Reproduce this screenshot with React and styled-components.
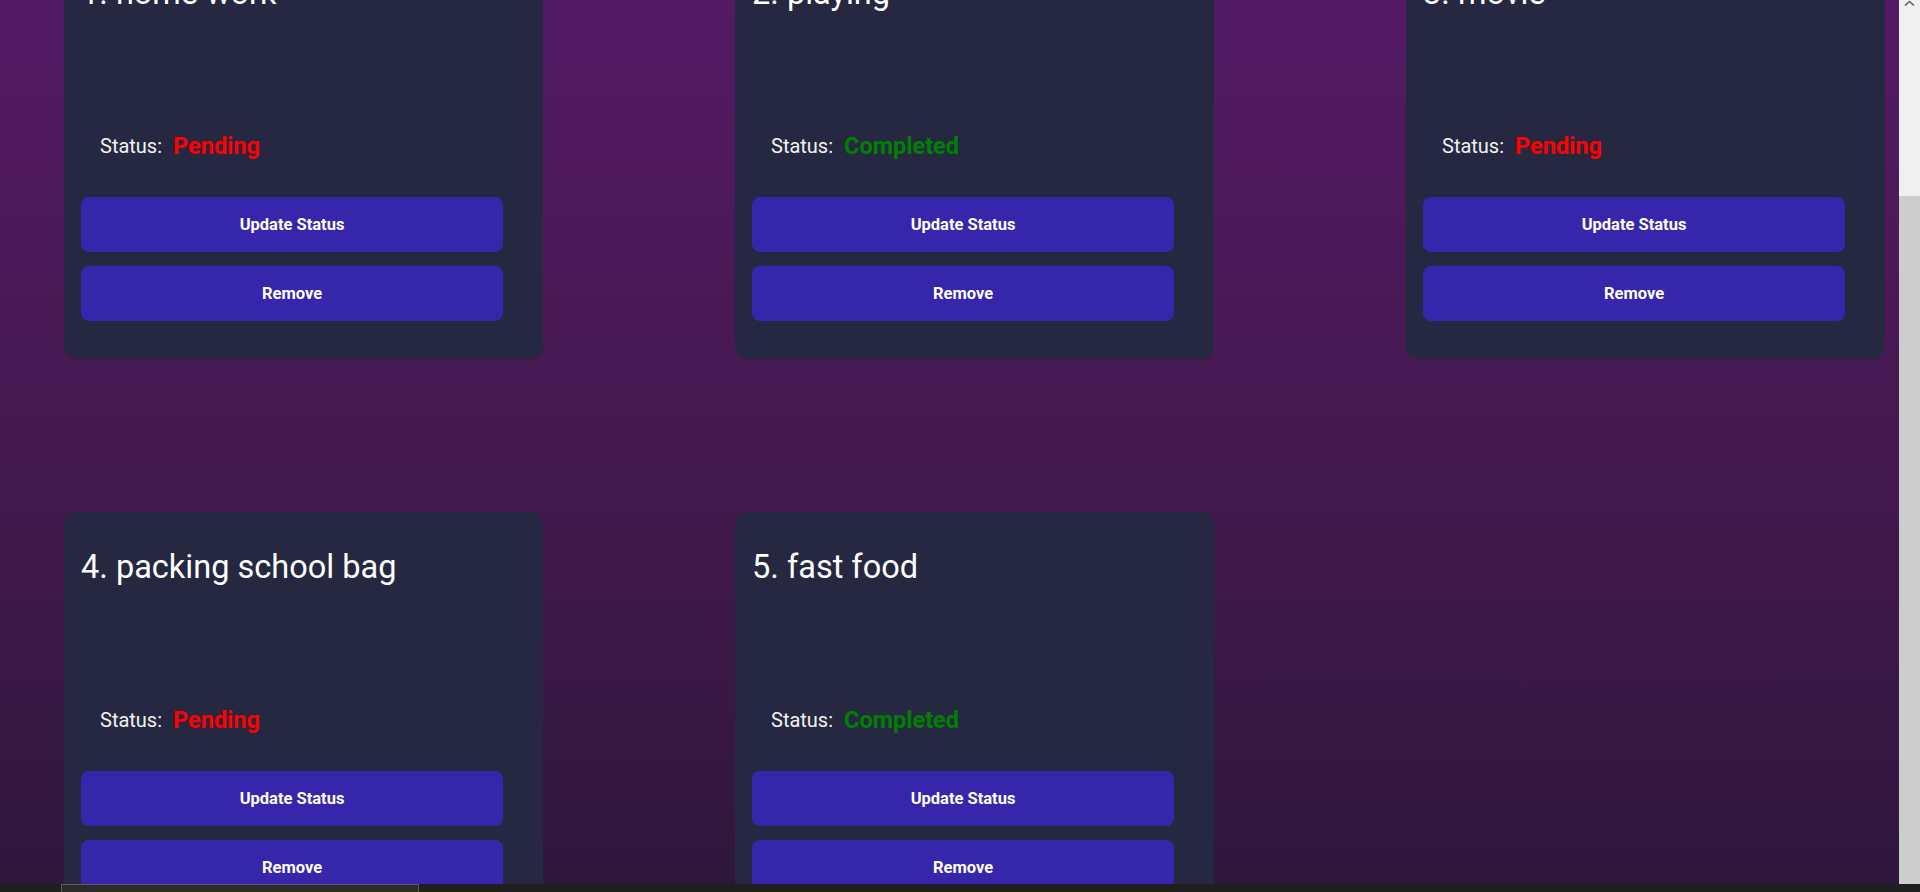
import React, { useLayoutEffect, useRef } from "react";
import styled, { createGlobalStyle } from "styled-components";

const GlobalStyle = createGlobalStyle`
  html, body {
    margin: 0;
    padding: 0;
    height: 100%;
    overflow: hidden;
  }
  body {
    font-family: Roboto, "Liberation Sans", Arial, sans-serif;
    background: #2f173d;
  }
`;

const Shell = styled.div`
  display: flex;
  width: 100vw;
  height: 100vh;
`;

const Viewport = styled.main`
  flex: 1;
  height: 100vh;
  overflow: hidden;
  background: linear-gradient(180deg, #541a65 0%, #44194f 50%, #2f173c 100%);
`;

const Board = styled.div`
  display: grid;
  grid-template-columns: repeat(3, 479px);
  column-gap: 192px;
  row-gap: 153px;
  padding: 40px 0 60px 64px;
`;

const Card = styled.article`
  display: flex;
  flex-direction: column;
  background: #252840;
  border-radius: 12px;
  padding: 37px 17px 38px;
  box-sizing: border-box;
  height: 421px;
`;

const Title = styled.h2`
  margin: 0;
  font-size: 32.5px;
  font-weight: 400;
  line-height: 37px;
  color: #ffffff;
`;

const StatusRow = styled.div`
  display: flex;
  align-items: center;
  gap: 11px;
  margin-top: 120px;
  padding-left: 19px;
  height: 27px;
`;

const StatusLabel = styled.span`
  font-size: 20px;
  color: #f2f2f2;
`;

const StatusValue = styled.span`
  font-size: 23.5px;
  font-weight: 700;
  color: ${({ $done }) => ($done ? "#008000" : "#ff0000")};
`;

const Actions = styled.div`
  display: flex;
  flex-direction: column;
  gap: 14px;
  margin-top: 38px;
`;

const Button = styled.button`
  width: 422px;
  height: 55px;
  border: none;
  border-radius: 8px;
  background: #3626ac;
  color: #ffffff;
  font-family: Roboto, "Liberation Sans", Arial, sans-serif;
  font-size: 16.5px;
  font-weight: 700;
  cursor: pointer;
`;

const Scrollbar = styled.div`
  width: 21px;
  height: 100vh;
  display: flex;
  flex-direction: column;
  background: #f0f0f0;
`;

const ArrowUp = styled.div`
  height: 12px;
  display: flex;
  justify-content: center;
  align-items: flex-start;
`;

const Thumb = styled.div`
  flex: 1;
  margin-top: 184px;
  background: #cdcdcd;
`;

const Taskbar = styled.div`
  position: fixed;
  left: 0;
  right: 0;
  bottom: 0;
  height: 8px;
  background: #1f1f22;
  display: flex;
  padding-left: 61px;
`;

const TaskPreview = styled.div`
  width: 356px;
  border: 1px solid #5c5c5c;
  border-bottom: none;
  background: #2b2b2b;
`;

const tasks = [
  { id: 1, title: "home work", done: false },
  { id: 2, title: "playing", done: true },
  { id: 3, title: "movie", done: false },
  { id: 4, title: "packing school bag", done: false },
  { id: 5, title: "fast food", done: true },
];

const TaskCard = ({ index, task }) => (
  <Card>
    <Title>
      {index}. {task.title}
    </Title>
    <StatusRow>
      <StatusLabel>Status:</StatusLabel>
      <StatusValue $done={task.done}>
        {task.done ? "Completed" : "Pending"}
      </StatusValue>
    </StatusRow>
    <Actions>
      <Button>Update Status</Button>
      <Button>Remove</Button>
    </Actions>
  </Card>
);

const App = () => {
  const viewRef = useRef(null);

  useLayoutEffect(() => {
    if (viewRef.current) viewRef.current.scrollTop = 102;
  }, []);

  return (
    <>
      <GlobalStyle />
      <Shell>
        <Viewport ref={viewRef}>
          <Board>
            {tasks.map((task, i) => (
              <TaskCard key={task.id} index={i + 1} task={task} />
            ))}
          </Board>
        </Viewport>
        <Scrollbar>
          <ArrowUp>
            <svg width="11" height="6" viewBox="0 0 11 6">
              <polyline
                points="1,5.5 5.5,1.5 10,5.5"
                fill="none"
                stroke="#606060"
                strokeWidth="1.6"
              />
            </svg>
          </ArrowUp>
          <Thumb />
        </Scrollbar>
      </Shell>
      <Taskbar>
        <TaskPreview />
      </Taskbar>
    </>
  );
};

export default App;
